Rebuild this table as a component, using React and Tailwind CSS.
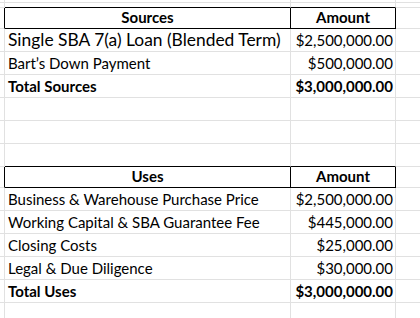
import React from 'react';

const grid = 'border-[#e1e1e1]';

const sources = [
  { label: 'Single SBA 7(a) Loan (Blended Term)', amount: '$2,500,000.00', big: true },
  { label: 'Bart\u2019s Down Payment', amount: '$500,000.00' },
  { label: 'Total Sources', amount: '$3,000,000.00', bold: true },
];

const uses = [
  { label: 'Business & Warehouse Purchase Price', amount: '$2,500,000.00' },
  { label: 'Working Capital & SBA Guarantee Fee', amount: '$445,000.00' },
  { label: 'Closing Costs', amount: '$25,000.00' },
  { label: 'Legal & Due Diligence', amount: '$30,000.00' },
  { label: 'Total Uses', amount: '$3,000,000.00', bold: true },
];

// one spreadsheet row: gutter, col A, col B, col C
const Row = ({ h, a, b, edge = {} }) => (
  <div className="flex" style={{ height: h }}>
    <div className={`w-[5px] shrink-0 border-r border-b ${grid} ${edge.gutter || ''}`} />
    <div className={`w-[286px] shrink-0 border-r border-b ${grid} ${edge.a || ''} flex items-end px-[3px] pb-[1px] whitespace-nowrap`}>
      {a}
    </div>
    <div className={`w-[105px] shrink-0 border-r border-b ${grid} ${edge.b || ''} flex items-end justify-end px-[2px] pb-[1px] whitespace-nowrap`}>
      {b}
    </div>
    <div className={`flex-1 border-b ${grid}`} />
  </div>
);

const Header = ({ title }) => (
  <Row
    h={21}
    edge={{ gutter: 'border-r-black', a: 'border-r-black border-b-black', b: 'border-r-black border-b-black' }}
    a={<span className="w-full text-center font-bold">{title}</span>}
    b={<span className="w-full text-center font-bold">Amount</span>}
  />
);

const Line = ({ item }) => (
  <Row
    h={23}
    a={<span className={item.bold ? 'font-bold' : item.big ? 'text-[17.4px]' : ''}>{item.label}</span>}
    b={<span className={item.bold ? 'font-bold' : ''}>{item.amount}</span>}
  />
);

const topEdge = { a: 'border-b-black', b: 'border-b-black' };

export default function App() {
  return (
    <div
      className="w-[420px] h-[318px] overflow-hidden bg-white text-black text-[15px] leading-[20px]"
      style={{ fontFamily: 'Lato, "Open Sans", sans-serif' }}
    >
      <Row h={3} />
      <Row h={5} edge={topEdge} />
      <Header title="Sources" />
      {sources.map((s) => (
        <Line key={s.label} item={s} />
      ))}
      <Row h={23} />
      <Row h={23} />
      <Row h={23} edge={topEdge} />
      <Header title="Uses" />
      {uses.map((u) => (
        <Line key={u.label} item={u} />
      ))}
      <Row h={23} />
    </div>
  );
}
